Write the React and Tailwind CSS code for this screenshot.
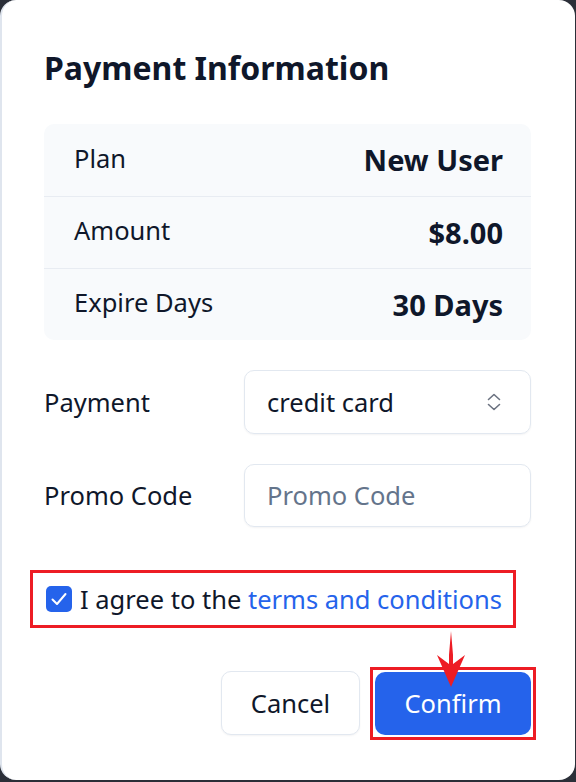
const rows = [
  { label: "Plan", value: "New User" },
  { label: "Amount", value: "$8.00" },
  { label: "Expire Days", value: "30 Days" },
];

const App = () => {
  return (
    <div className="h-screen w-full bg-[#2b2f38] font-['Noto_Sans',sans-serif] text-[#0f172a]">
      <div className="relative h-[780px] w-[575px] rounded-[16px] border-l-2 border-[#dfe5ee] bg-white pl-[42px] pr-[44px] pt-[52px]">
        <h2 className="text-[32px] font-bold leading-none">
          Payment Information
        </h2>

        <div className="mt-[40px] rounded-[10px] bg-[#f8fafc]">
          {rows.map((row, i) => (
            <div
              key={row.label}
              className={`flex h-[72px] items-center justify-between pl-[30px] pr-[28px] ${
                i > 0 ? "border-t border-[#e8ecf2]" : ""
              }`}
            >
              <span className="-mt-[4px] text-[25.5px]">{row.label}</span>
              <span className="text-[29px] font-bold">{row.value}</span>
            </div>
          ))}
        </div>

        <div className="mt-[30px] flex items-center">
          <span className="w-[200px] text-[25.5px]">Payment</span>
          <div className="flex h-[64px] flex-1 items-center justify-between rounded-[10px] border border-[#e2e8f0] pl-[22px] pr-[29px] shadow-[0_1px_2px_rgba(15,23,42,0.05)]">
            <span className="text-[25.5px]">credit card</span>
            <svg width="14" height="18" viewBox="0 0 14 18" fill="none" stroke="#6b7280" strokeWidth="1.6" strokeLinecap="round" strokeLinejoin="round">
              <path d="M1.5 6.5L7 1.5l5.5 5" />
              <path d="M1.5 11.5L7 16.5l5.5-5" />
            </svg>
          </div>
        </div>

        <div className="mt-[30px] flex items-center">
          <span className="w-[200px] text-[25.5px]">Promo Code</span>
          <div className="flex h-[63px] flex-1 items-center rounded-[10px] border border-[#e2e8f0] pl-[22px] shadow-[0_1px_2px_rgba(15,23,42,0.05)]">
            <span className="text-[25.5px] text-[#64748b]">Promo Code</span>
          </div>
        </div>

        <div className="ml-[-14px] mt-[43px] flex h-[58px] w-[486px] items-center border-[3px] border-[#ed1c24] pl-[13px]">
          <span className="flex h-[26px] w-[26px] shrink-0 items-center justify-center rounded-[5px] bg-[#2563eb]">
            <svg width="20" height="20" viewBox="0 0 20 20" fill="none" stroke="white" strokeWidth="2" strokeLinecap="round" strokeLinejoin="round">
              <path d="M3.5 10.5l4.5 4.5L16.5 5" />
            </svg>
          </span>
          <span className="ml-[8px] whitespace-nowrap text-[25.5px]">
            I agree to the <span className="text-[#2563eb]">terms and conditions</span>
          </span>
        </div>

        <div className="mt-[43px] flex justify-end gap-[10px]">
          <button className="h-[64px] w-[139px] rounded-[10px] border border-[#e2e8f0] bg-white text-[25.5px] shadow-[0_1px_2px_rgba(15,23,42,0.05)]">
            Cancel
          </button>
          <div className="-mr-[5px] -mt-[4px] border-[3px] border-[#ed1c24] p-[2px]">
            <button className="h-[63px] w-[156px] rounded-[10px] bg-[#2563eb] text-[25.5px] text-white">
              Confirm
            </button>
          </div>
        </div>

        {/* annotation arrow */}
        <svg className="absolute left-[432px] top-[631px]" width="34" height="58" viewBox="0 0 34 58">
          <path d="M17 0 L19 24 L19 33 L31 24 L17 56 L3 24 L15 33 L15 24 Z" fill="#ed1c24" />
        </svg>
      </div>
    </div>
  );
};

export default App;
